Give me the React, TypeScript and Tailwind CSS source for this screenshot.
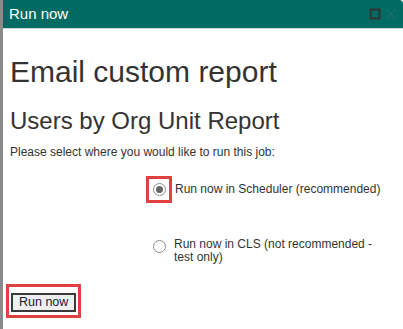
export default function App() {
  return (
    <div className="flex h-[329px] w-[403px] overflow-hidden bg-white font-['Liberation_Sans',Arial,sans-serif] text-[#333]">
      {/* left window edge */}
      <div className="w-[3px] shrink-0 bg-[#8a8a8a]" />
      <div className="flex flex-1 flex-col">
        {/* title bar */}
        <div className="flex h-[29px] shrink-0 items-center justify-between rounded-tr-[4px] border-b border-[#cfd8d6] bg-[#006b63] pl-[6px] pr-[6px]">
          <span className="text-[15px] text-white">Run now</span>
          <div className="flex items-center gap-[4px]">
            <svg width="12" height="12" viewBox="0 0 12 12">
              <rect x="1.5" y="1.5" width="9" height="9" fill="none" stroke="#333" strokeWidth="2" />
            </svg>
            <svg width="12" height="12" viewBox="0 0 12 12">
              <path d="M1 1L11 11M11 1L1 11" stroke="#1f6e66" strokeWidth="1.3" />
            </svg>
          </div>
        </div>

        <div className="flex flex-1 flex-col pl-[7px]">
          <h1 className="mt-[26px] text-[30px] leading-[34px]">Email custom report</h1>
          <h2 className="mt-[18px] text-[24px] leading-[28px]">Users by Org Unit Report</h2>
          <p className="mt-[10px] text-[12px] leading-[15px]">Please select where you would like to run this job:</p>

          <div className="ml-[136px] mt-[16px] flex items-center">
            <div className="flex h-[27px] w-[26px] items-center justify-center border-[3px] border-[#e0403f]">
              <span className="flex h-[13px] w-[13px] items-center justify-center rounded-full border border-[#8c8c8c] bg-white">
                <span className="h-[7px] w-[7px] rounded-full bg-[#666]" />
              </span>
            </div>
            <span className="ml-[3px] text-[12px] leading-[15px]">Run now in Scheduler (recommended)</span>
          </div>

          <div className="ml-[143px] mt-[35px] flex items-start">
            <span className="mt-[2px] h-[13px] w-[13px] rounded-full border border-[#8c8c8c] bg-white" />
            <span className="ml-[8px] w-[205px] text-[12px] leading-[13px]">
              Run now in CLS (not recommended - test only)
            </span>
          </div>

          <div className="mt-[20px] flex">
            <div className="-ml-[4px] border-[3px] border-[#e0403f] p-[2px]">
              <button className="h-[19px] border-2 border-[#3a3a3a] bg-[#efefef] px-[6px] text-[12.5px] leading-[14px] text-[#1a1a40]">
                Run now
              </button>
            </div>
          </div>
        </div>
      </div>
    </div>
  );
}
